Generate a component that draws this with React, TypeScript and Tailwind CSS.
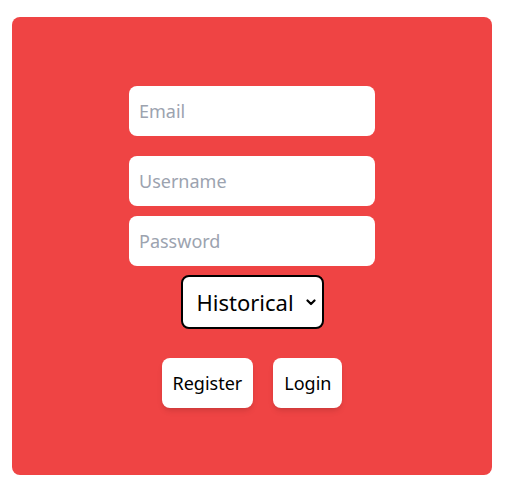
import { useState } from 'react';

const font = { fontFamily: '"Noto Sans", "Open Sans", sans-serif' };

function Field({ placeholder, type = 'text' }: { placeholder: string; type?: string }) {
  return (
    <input
      className="h-[50px] w-[246px] rounded-lg bg-white px-[10px] text-[18px] text-gray-900 outline-none placeholder:text-[#9ca3af]"
      placeholder={placeholder}
      type={type}
    />
  );
}

export default function App() {
  const [mode, setMode] = useState('Historical');

  return (
    <div className="h-[494px] w-[505px] bg-white pt-[17px] pl-3" style={font}>
      <div className="flex h-[458px] w-[480px] flex-col items-center rounded-lg bg-[#ef4444] pt-[69px]">
        <Field placeholder="Email" type="email" />
        <div className="mt-5 flex flex-col gap-[10px]">
          <Field placeholder="Username" />
          <Field placeholder="Password" type="password" />
        </div>

        <div className="relative mt-[9px]">
          <select
            className="h-[54px] w-[143px] appearance-none rounded-lg border-2 border-black bg-white pl-[14px] text-[22px] text-black outline-none"
            onChange={(e) => setMode(e.target.value)}
            value={mode}
          >
            <option>Historical</option>
            <option>Live</option>
          </select>
          <svg
            className="pointer-events-none absolute top-1/2 right-[8px] -translate-y-1/2"
            fill="none"
            height="10"
            stroke="black"
            strokeLinecap="round"
            strokeLinejoin="round"
            strokeWidth="2.2"
            viewBox="0 0 10 10"
            width="10"
          >
            <path d="M1.5 3.5 5 7l3.5-3.5" />
          </svg>
        </div>

        <div className="mt-[29px] flex gap-5">
          <button
            className="h-[50px] rounded-lg bg-white px-[11px] text-[18px] text-black shadow-md"
            type="button"
          >
            Register
          </button>
          <button
            className="h-[50px] rounded-lg bg-white px-[11px] text-[18px] text-black shadow-md"
            type="button"
          >
            Login
          </button>
        </div>
      </div>
    </div>
  );
}
